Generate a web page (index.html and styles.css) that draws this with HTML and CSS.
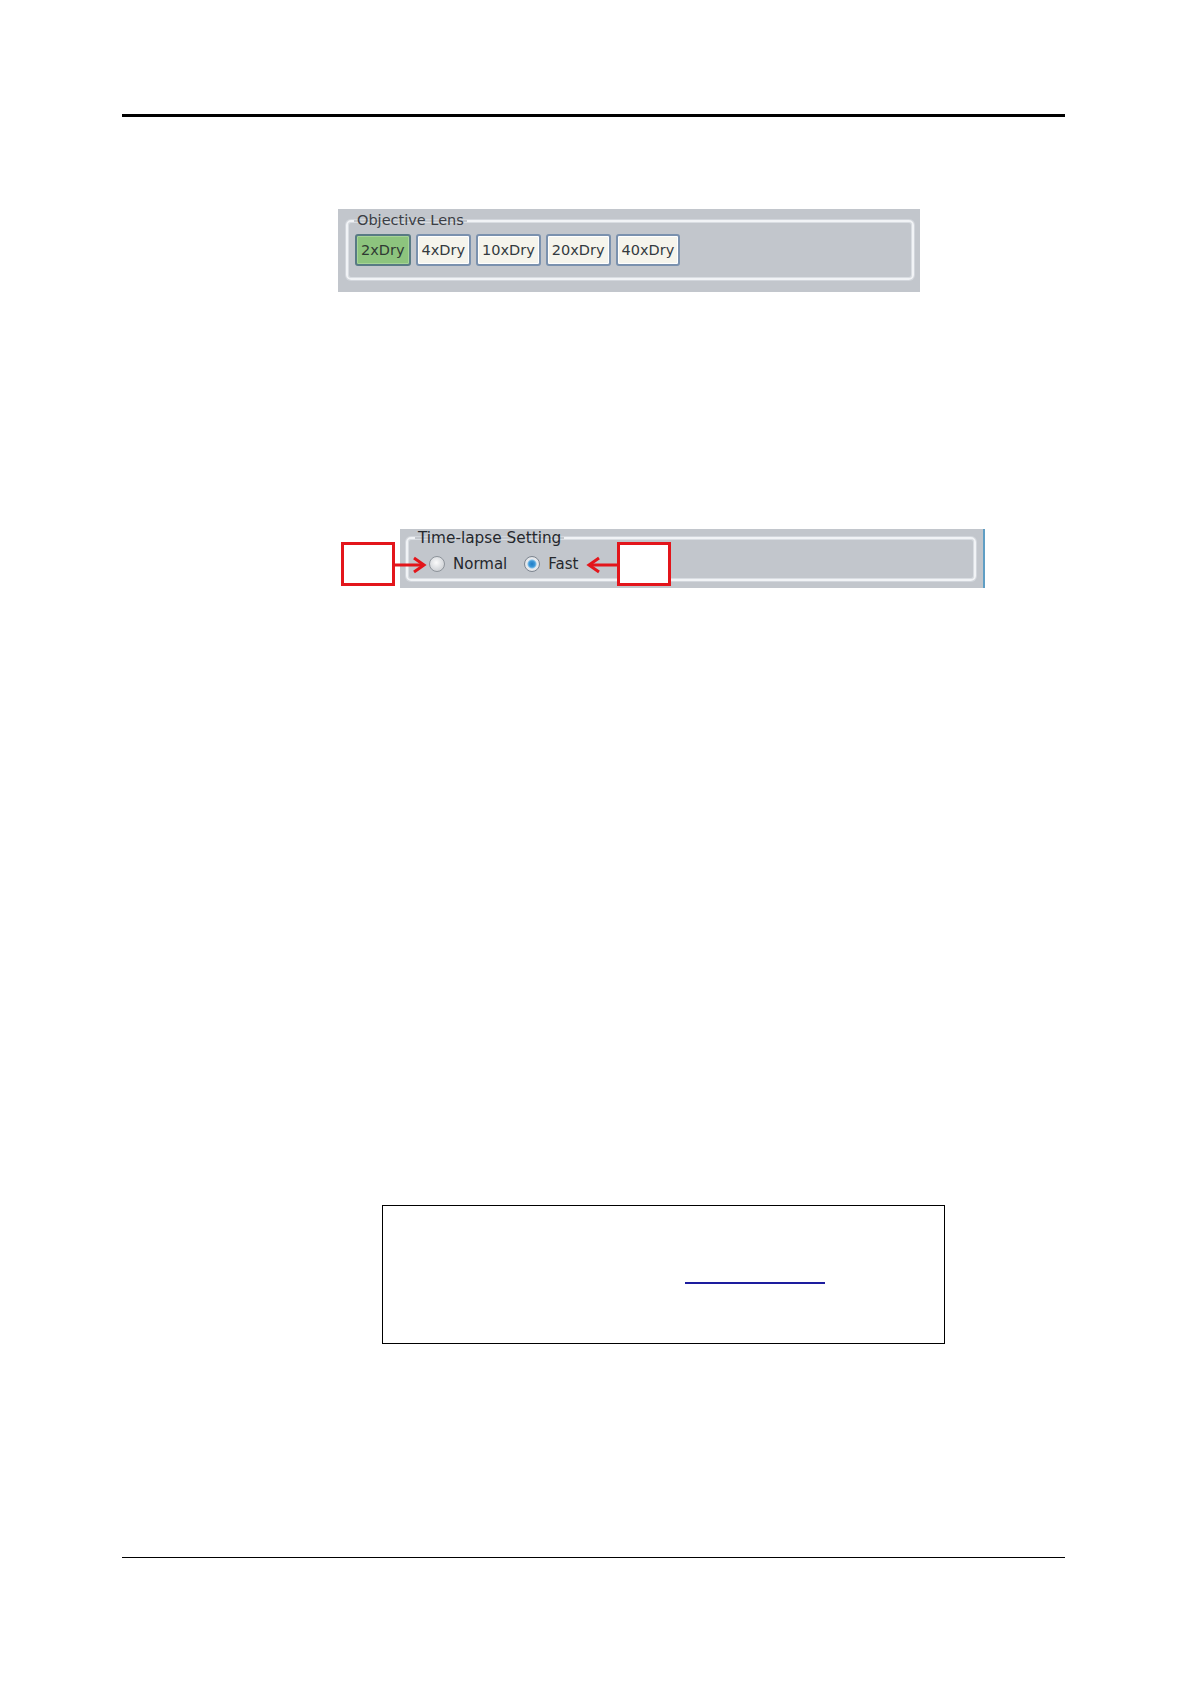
FILE: index.html
```html
<!DOCTYPE html>
<html lang="en">
<head>
<meta charset="utf-8">
<title>Objective Lens / Time-lapse Setting</title>
<link rel="stylesheet" href="styles.css">
</head>
<body>
<div class="page">
  <div class="rule-top"></div>

  <section class="fig-lens">
    <div class="panel panel-lens">
      <fieldset class="group group-lens">
        <legend class="legend legend-lens">Objective Lens</legend>
        <div class="btn-row">
          <button class="lens-btn is-active" type="button">2xDry</button>
          <button class="lens-btn" type="button">4xDry</button>
          <button class="lens-btn" type="button">10xDry</button>
          <button class="lens-btn" type="button">20xDry</button>
          <button class="lens-btn" type="button">40xDry</button>
        </div>
      </fieldset>
    </div>
  </section>

  <section class="fig-time">
    <div class="panel panel-time">
      <fieldset class="group group-time">
        <legend class="legend legend-time">Time-lapse Setting</legend>
        <div class="radio-row">
          <label class="radio"><span class="radio-dot"></span><span class="radio-text">Normal</span></label>
          <label class="radio"><span class="radio-dot is-checked"></span><span class="radio-text">Fast</span></label>
        </div>
      </fieldset>
    </div>
    <div class="callout callout-left"></div>
    <svg class="arrow arrow-right" width="32" height="18" viewBox="0 0 32 18">
      <line x1="0" y1="9" x2="29" y2="9" stroke="#e3151b" stroke-width="3"/>
      <polyline points="19,2 29,9 19,16" fill="none" stroke="#e3151b" stroke-width="3"/>
    </svg>
    <svg class="arrow arrow-left" width="32" height="18" viewBox="0 0 32 18">
      <line x1="3" y1="9" x2="32" y2="9" stroke="#e3151b" stroke-width="3"/>
      <polyline points="13,2 3,9 13,16" fill="none" stroke="#e3151b" stroke-width="3"/>
    </svg>
    <div class="callout callout-right"></div>
  </section>

  <div class="note-box">
    <a class="note-link" href="#" aria-label="link"></a>
  </div>

  <div class="rule-bottom"></div>
</div>
</body>
</html>
```
FILE: styles.css
```css
html, body {
  margin: 0;
  padding: 0;
  background: #ffffff;
}

.page {
  width: 1191px;
  height: 1684px;
  overflow: hidden;
  padding-top: 114px;
  box-sizing: border-box;
  font-family: "DejaVu Sans", Verdana, sans-serif;
}

.rule-top {
  margin-left: 122px;
  width: 943px;
  height: 3px;
  background: #000;
}

/* ---------- Objective Lens panel ---------- */
.fig-lens {
  margin-top: 92px;
  margin-left: 338px;
  width: 582px;
}

.panel {
  background: #c2c6cc;
  box-sizing: border-box;
  display: flex;
  flex-direction: column;
}

.panel-lens {
  height: 83px;
  padding: 3px 6px 12px 8px;
}

.group {
  flex: 1;
  margin: 0;
  min-width: 0;
  border: 2px solid #f1f3f6;
  border-radius: 5px;
  box-shadow: inset 0 0 0 1px #d9dde2, 0 0 0 1px #d2d6dc;
}

.group-lens {
  padding: 0 0 0 6px;
}

.legend {
  padding: 0 3px;
  color: #3b3e45;
}

.legend-lens {
  font-size: 14.5px;
  line-height: 17px;
}

.btn-row {
  display: flex;
  gap: 5px;
  margin-top: 5px;
  margin-left: 1px;
}

.lens-btn {
  height: 32px;
  box-sizing: border-box;
  padding: 0 4px;
  margin: 0;
  border: 2px solid #7a91ae;
  border-radius: 3px;
  background: #f5f4ec;
  box-shadow: inset 0 0 0 1px #ffffff;
  font-family: "DejaVu Sans", Verdana, sans-serif;
  font-size: 14.5px;
  color: #333a40;
}

.lens-btn.is-active {
  background: #8dc47e;
  border-color: #587a84;
  box-shadow: inset 0 0 0 1px #a6d496;
  color: #2f3a33;
}

/* ---------- Time-lapse panel ---------- */
.fig-time {
  position: relative;
  margin-top: 237px;
  margin-left: 341px;
  width: 644px;
}

.panel-time {
  margin-left: 59px;
  width: 585px;
  height: 59px;
  padding: 0 7px 7px 6px;
  border-right: 2px solid #5f9ec4;
}

.group-time {
  padding: 0 0 0 7px;
}

.legend-time {
  font-size: 15.3px;
  line-height: 18px;
  color: #25282d;
}

.radio-row {
  display: flex;
  align-items: center;
  gap: 17px;
  margin-top: 8px;
  margin-left: 14px;
  height: 18px;
}

.radio {
  display: flex;
  align-items: center;
  gap: 8px;
  font-size: 15px;
  color: #25282d;
}

.radio-dot {
  width: 16px;
  height: 16px;
  box-sizing: border-box;
  border-radius: 50%;
  border: 1px solid #8e949b;
  background: radial-gradient(circle at 45% 40%, #fbfbfb 0, #e0e2e5 45%, #c2c5c9 100%);
}

.radio-dot.is-checked {
  border-color: #7d8590;
  background: radial-gradient(circle at 50% 50%, #1d7cc6 0, #3e98d8 3px, #7cbde8 4px, #e9ebee 5px, #d3d6da 100%);
}

.callout {
  position: absolute;
  top: 13px;
  width: 54px;
  height: 44px;
  box-sizing: border-box;
  border: 3px solid #e3151b;
  background: #ffffff;
}

.callout-left {
  left: 0;
}

.callout-right {
  left: 276px;
}

.arrow {
  position: absolute;
  top: 27px;
}

.arrow-right {
  left: 54px;
}

.arrow-left {
  left: 245px;
}

/* ---------- Note box ---------- */
.note-box {
  margin-top: 617px;
  margin-left: 382px;
  width: 563px;
  height: 139px;
  box-sizing: border-box;
  border: 1px solid #000;
  padding: 60px 0 0 302px;
}

.note-link {
  display: block;
  width: 140px;
  height: 16px;
  border-bottom: 2px solid #1d1d9e;
}

.rule-bottom {
  margin-top: 213px;
  margin-left: 122px;
  width: 943px;
  height: 1px;
  background: #000;
}
```
